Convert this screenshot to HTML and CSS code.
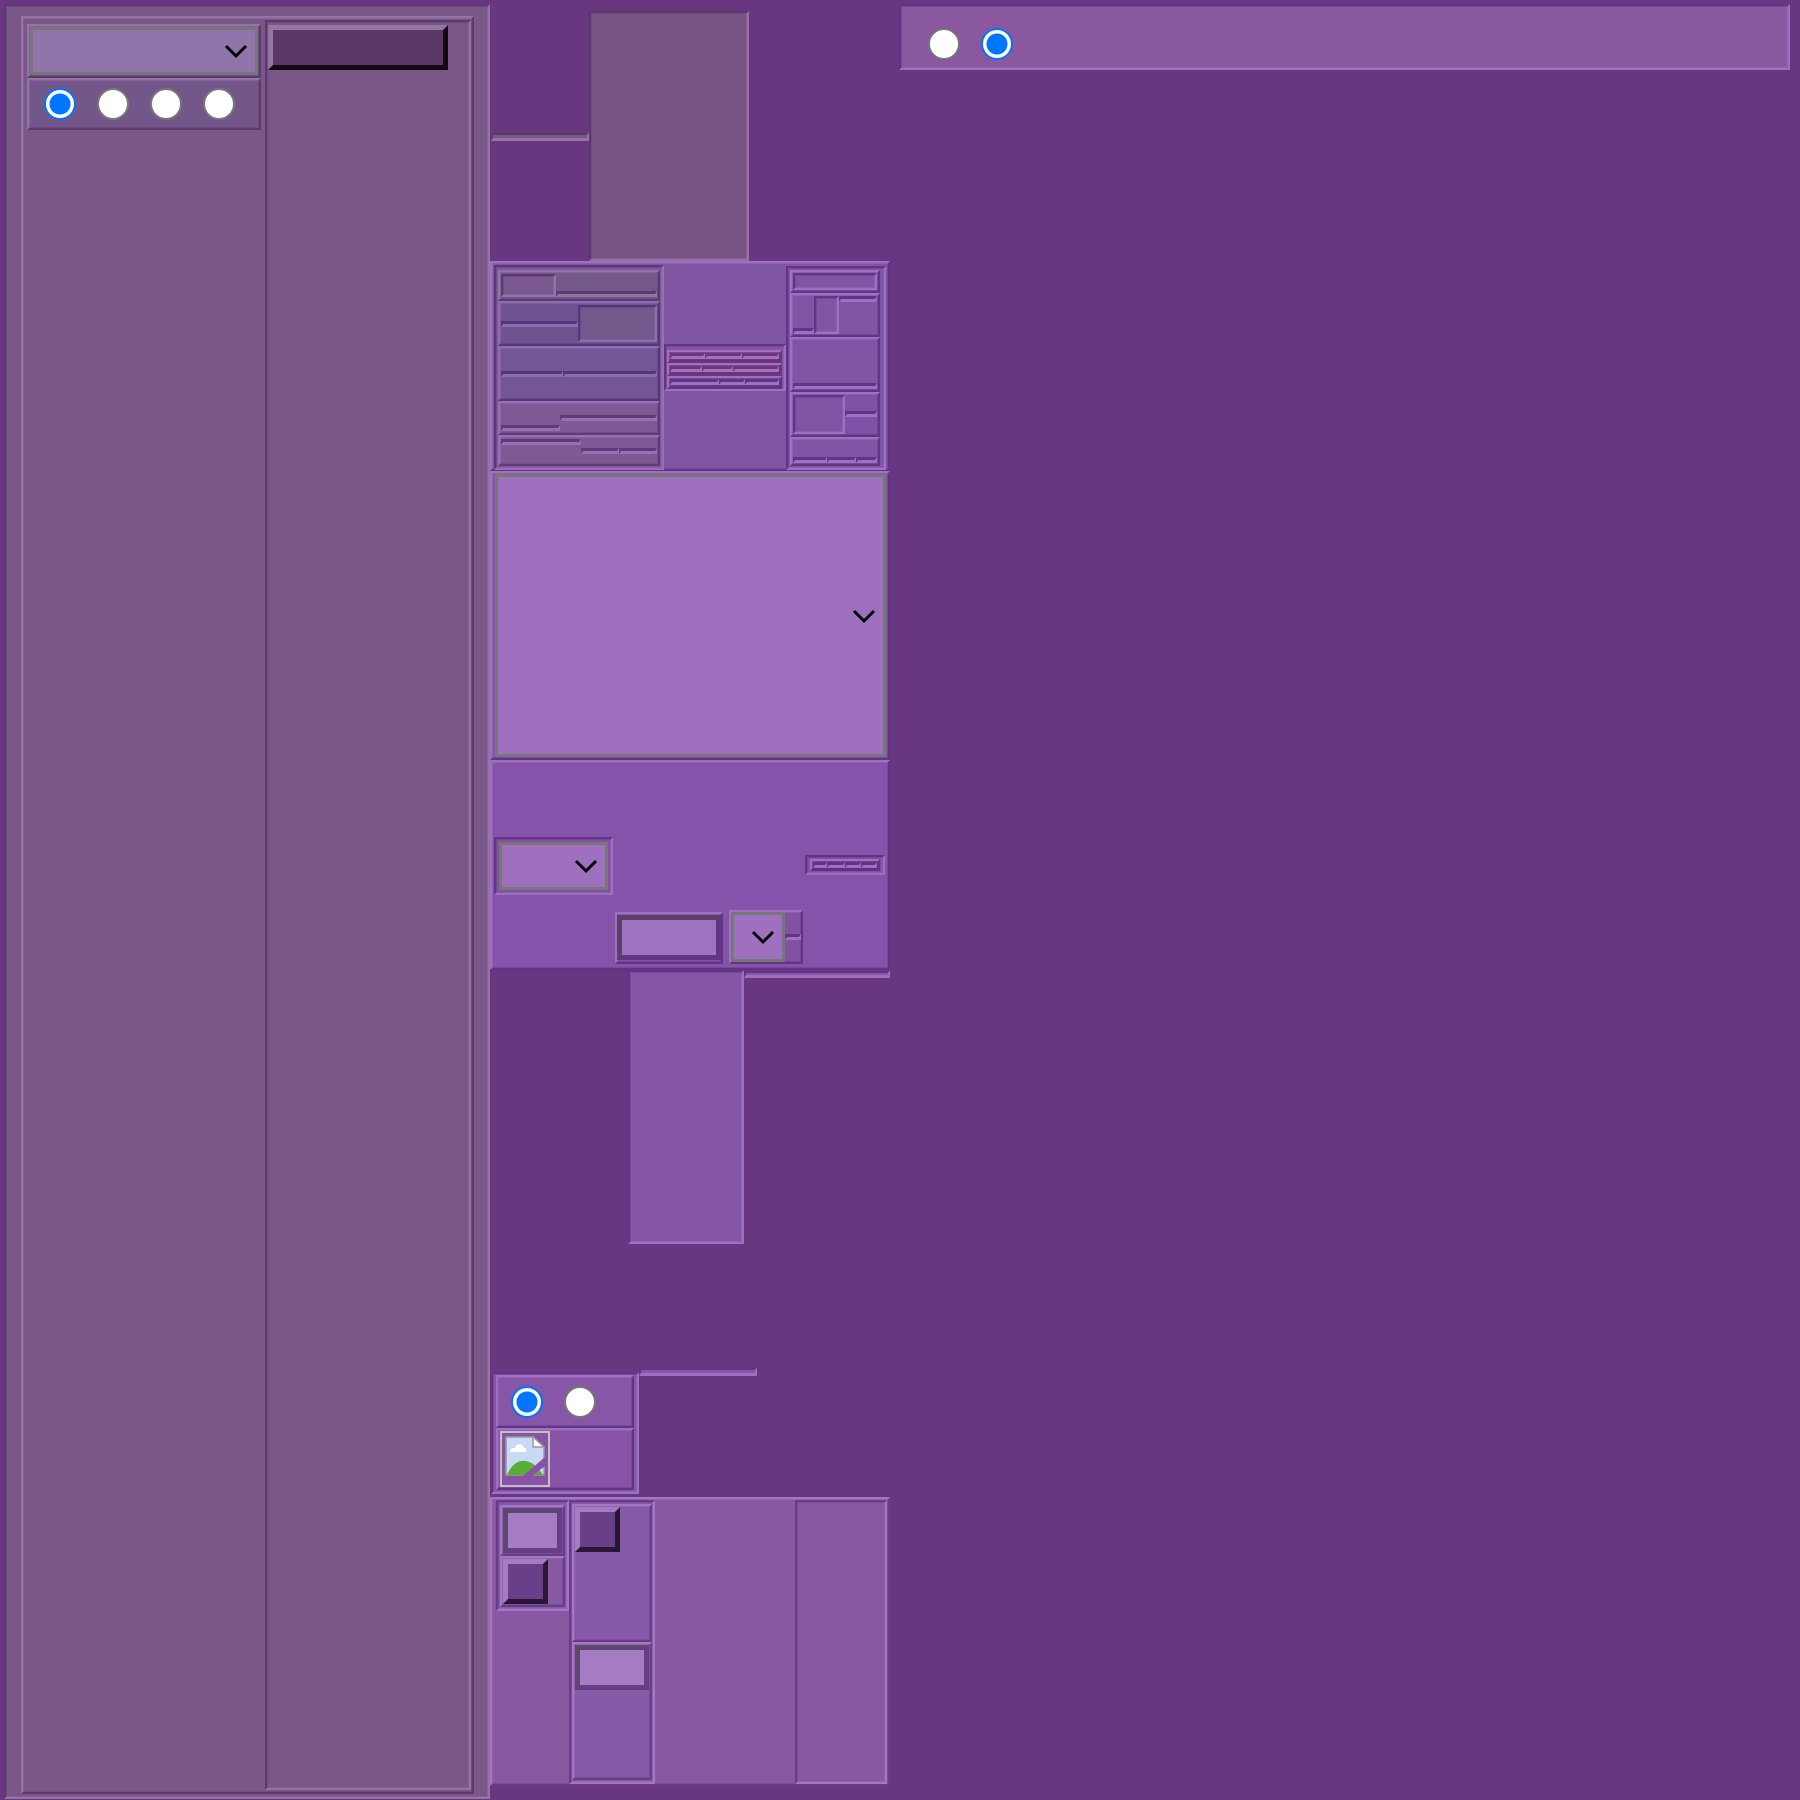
FILE: index.html
```html
<!DOCTYPE html>
<html lang="en">
<head>
<meta charset="utf-8">
<meta name="viewport" content="width=device-width, initial-scale=1">
<link rel="stylesheet" href="styles.css">
</head>
<body>
<main class="page">
  <section class="side in mauve">
    <div class="side-inner out">
      <div class="side-form">
        <div class="cell out"><div class="pick"><select aria-label="Option"></select><svg viewBox="0 0 22 12"><path d="M1 1l10 10L21 1"/></svg></div></div>
        <div class="radios out cool">
          <input type="radio" name="a" aria-label="First" checked><input type="radio" name="a" aria-label="Second"><input type="radio" name="a" aria-label="Third"><input type="radio" name="a" aria-label="Fourth">
        </div>
      </div>
      <div class="side-action in"><button type="button" class="wide" aria-label="Apply"></button></div>
    </div>
  </section>

  <div class="middle">
    <section class="intro mauve"><div class="strip tall"></div><div class="in intro-box"></div></section>

    <section class="tables out">
      <div class="list-left in mauve">
        <div class="row out l1"><div class="in"></div><div class="strip end"></div></div>
        <div class="row out l2"><div class="strip mid"></div><div class="in"></div></div>
        <div class="row out l3"><div class="strip mid"></div><div class="strip mid"></div></div>
        <div class="row out l4"><div class="strip end"></div><div class="strip mid"></div></div>
        <div class="row out l5"><div class="strip"></div><div class="strip mid"></div><div class="strip mid"></div></div>
      </div>
      <div class="list-mid in">
        <div class="row out m1"><div class="strip"></div><div class="strip"></div><div class="strip"></div></div>
        <div class="row out m2"><div class="strip"></div><div class="strip"></div><div class="strip"></div></div>
        <div class="row out m3"><div class="strip"></div><div class="strip"></div><div class="strip"></div></div>
      </div>
      <div class="list-right in">
        <div class="row out r1"><div class="in"></div></div>
        <div class="row out r2"><div class="strip end"></div><div class="in"></div><div class="strip"></div></div>
        <div class="row out r3"><div class="strip end"></div></div>
        <div class="row out r4"><div class="in"></div><div class="strip mid"></div></div>
        <div class="row out r5"><div class="strip end"></div><div class="strip end"></div><div class="strip end"></div></div>
      </div>
    </section>

    <section class="big out"><div class="pick"><select aria-label="Choice"></select><svg viewBox="0 0 22 12"><path d="M1 1l10 10L21 1"/></svg></div></section>

    <section class="controls out">
      <div class="control-a in"><div class="pick"><select aria-label="Kind"></select><svg viewBox="0 0 22 12"><path d="M1 1l10 10L21 1"/></svg></div></div>
      <div class="control-b out"><input type="text" aria-label="Value"></div>
      <div class="control-c out"><div class="pick"><select aria-label="Unit"></select><svg viewBox="0 0 22 12"><path d="M1 1l10 10L21 1"/></svg></div><div class="strip mid"></div></div>
      <div class="control-d in"><div class="row out"><div class="strip"></div><div class="strip"></div><div class="strip"></div><div class="strip"></div></div></div>
    </section>

    <section class="spacer"><div class="in"></div><div class="strip thick"></div></section>

    <section class="media">
      <div class="media-box in">
        <div class="radios out"><input type="radio" name="b" aria-label="On" checked><input type="radio" name="b" aria-label="Off"></div>
        <div class="picture out">
          <div class="frame">
            <svg viewBox="0 0 40 40">
              <path d="M1 1h27l11 10v28H1z" fill="#c8daf5" stroke="#999" stroke-width="1.5"/>
              <path d="M5 16c0-4 3-4 5-4 1-5 8-5 9 0 3 0 3 4 1 4z" fill="#fff"/>
              <path d="M2 39c8-19 24-19 36 0z" fill="#58ad36"/>
              <path d="M28 1v10h11z" fill="#fff" stroke="#999" stroke-width="1.5"/>
              <path d="M18 40L40 21v9L27 40z" fill="#8853a6"/>
            </svg>
          </div>
        </div>
      </div>
      <div class="strip tall"></div>
    </section>

    <section class="footer out">
      <div class="foot-a in">
        <div class="out foot-cell"><input type="text" aria-label="Code"></div>
        <div class="out foot-cell"><button type="button" aria-label="Add"></button></div>
      </div>
      <div class="foot-b in">
        <div class="out"><button type="button" aria-label="Save"></button></div>
        <div class="out"><input type="text" aria-label="Note"></div>
      </div>
      <div class="foot-c in"></div>
    </section>
  </div>

  <section class="right in"><div class="radios"><input type="radio" name="c" aria-label="No"><input type="radio" name="c" aria-label="Yes" checked></div></section>
</main>
</body>
</html>
```
FILE: styles.css
```css
* { box-sizing: border-box; }

body {
  --light: #9d70c2;
  --dark: #613485;
  margin: 0;
  background: #693782;
  font-family: "Liberation Sans", sans-serif;
}

.page {
  display: grid;
  grid-template-columns: minmax(0, 486fr) minmax(0, 400fr) minmax(0, 900fr);
  align-items: start;
  padding: 4px 10px 1px 4px;
}

.mauve { --light: #9673a6; --dark: #5b3b6c; }

/* Bevels: sunken and raised boxes */
.in, .out { border: 2px solid; }
.in {
  border-color: var(--dark) var(--light) var(--light) var(--dark);
  box-shadow: inset 1px 1px rgb(70 30 100 / 20%), inset -1px -1px rgb(190 140 220 / 20%);
}
.out {
  border-color: var(--light) var(--dark) var(--dark) var(--light);
  box-shadow: inset 1px 1px rgb(190 140 220 / 20%), inset -1px -1px rgb(70 30 100 / 20%);
}
.strip {
  height: 6px;
  border: solid;
  border-width: 3px 2px 3px 2px;
  border-color: var(--dark) var(--light) var(--light) var(--dark);
}
.tall { height: 9px; background: #795887; }
.thick { height: 8px; background: #8656a6; }
.mid { align-self: center; }
.end { align-self: end; }

/* Form controls */
select, input, button { display: block; margin: 0; padding: 0; appearance: none; border-radius: 0; }
.pick { position: relative; min-width: 0; }
.pick select { width: 100%; height: 100%; border: 3px solid #777; background: #9f6fc0; }
.pick svg { position: absolute; top: 50%; right: 11px; width: 22px; height: 12px; margin-top: -6px; pointer-events: none; overflow: visible; fill: none; stroke: #000; stroke-width: 3; }
input[type="text"] {
  width: 100%;
  height: 45px;
  border: 5px solid;
  border-color: #5e476f #673d88 #673d88 #5e476f;
  background: #a57bc4;
}
button {
  width: 45px;
  height: 45px;
  border: 5px solid;
  border-color: #a57bc6 #281835 #281835 #a57bc6;
  background: #693f89;
}
.radios { display: flex; align-items: center; gap: 21px; }
input[type="radio"] { flex: none; width: 32px; height: 32px; border: 2px solid #777; border-radius: 50%; background: #fff; }
input[type="radio"]:checked { border-color: #0075ff; background: radial-gradient(circle, #0075ff 10px, #fff 11px); }

/* Left panel */
.side { min-height: 1795px; display: grid; padding: 10px 14px 3px 15px; background: #795887; }
.side-inner { display: grid; grid-template-columns: 236fr 208fr; gap: 4px; padding: 2px 1px 2px 4px; }
.side-inner > .side-action { padding: 3px 1px; }
.side-form { padding-top: 4px; }
.side-form .cell { height: 54px; padding: 1px; }
.side-form .pick { height: 48px; }
.side-form .pick select { background: #9075aa; }
.side-form .radios { height: 52px; padding-left: 15px; background: #73578b; }
.wide { width: 90%; border-color: #9473a5 #140a17 #140a17 #9473a5; background: #593868; }

/* Middle column */
.intro { height: 257px; padding: 7px 0 0 1px; display: grid; grid-template-columns: 98fr 160fr 141fr; align-items: center; }
.intro-box { height: 250px; background: #795585; }

.tables {
  height: 210px;
  padding: 2px;
  display: grid;
  grid-template-columns: 170fr 122fr 100fr;
  align-items: center;
  background: #8055a4;
}
.row { display: grid; padding: 1px; }
.list-left { padding: 3px 2px 2px; }
.list-left .row { padding: 2px 1px; }
.l1 { height: 31px; grid-template-columns: 55fr 101fr; background: #74588c; }
.l1 > .in { background: #7b5890; }
.l2 { height: 45px; grid-template-columns: 78fr 80fr; background: #705290; --light: #8b6db0; --dark: #54377a; }
.l2 > .in { background: #74588c; }
.l3 { height: 55px; grid-template-columns: 62fr 94fr; background: #745595; --light: #8b6db0; --dark: #54377a; }
.l4 { height: 34px; grid-template-columns: 59fr 97fr; background: #7f5896; --light: #976fb3; --dark: #5f3b79; }
.l5 { height: 31px; grid-template-columns: 79fr 38fr 38fr; background: #7e5a95; --light: #976fb3; --dark: #5f3b79; }

.list-mid { padding: 4px 2px 0 1px; }
.list-mid .row { height: 13px; }
.m1 { grid-template-columns: 36fr 37fr 38fr; --light: #a96db9; --dark: #693783; background: #693783; }
.m2 { grid-template-columns: 33fr 32fr 47fr; --light: #a96db9; --dark: #693783; background: #693783; }
.m3 { grid-template-columns: 50fr 26fr 35fr; background: #693783; }

.list-right { padding: 2px 4px 2px 2px; }
.r1 { height: 23px; }
.r2 { height: 44px; grid-template-columns: 21fr 26fr 38fr; }
.r3 { height: 55px; }
.r4 { height: 45px; grid-template-columns: 53fr 32fr; background: #7e50a6; }
.r4 > .in { background: #7f54a2; }
.r5 { height: 29px; grid-template-columns: 34fr 30fr 21fr; }

.big { height: 289px; padding: 1px 2px 1px 3px; background: #8653aa; }
.big .pick { height: 283px; }

.controls {
  height: 210px;
  padding: 0 3px 4px 2px;
  display: grid;
  grid-template-columns: 119fr 112fr 80fr 80fr;
  align-items: end;
  background: #8653aa;
}
.controls > * { background: #8251a2; }
.control-a { height: 58px; margin-bottom: 69px; padding: 3px; }
.control-a .pick { height: 48px; }
.control-b { height: 52px; margin: 0 2px; padding: 1px 0 0; }
.control-b input[type="text"] { border-color: #5b4069 #613484 #613484 #5b4069; background: #9d72bf; }
.control-c { height: 54px; margin: 0 2px 0 4px; display: grid; grid-template-columns: 55fr 16fr; }
.control-c .pick { height: 50px; }
.control-d { height: 20px; margin-bottom: 89px; padding: 2px 3px; }
.control-d .row { height: 12px; grid-template-columns: 15fr 19fr 16fr 17fr; background: #613485; }

.spacer { height: 397px; display: grid; grid-template-columns: 138fr 116fr 146fr; align-items: start; }
.spacer .in { grid-column: 2; height: 274px; background: #8656a6; }

.media { height: 130px; padding: 0 0 0 1px; display: grid; grid-template-columns: 148fr 118fr 133fr; align-items: start; }
.media-box { height: 122px; margin-top: 5px; padding: 1px 3px 2px; background: #8756a6; }
.media .radios { height: 53px; padding-left: 13px; }
.media .tall { background: #8756a6; }
.picture { height: 62px; padding: 1px 2px; background: #8853a6; }
.frame { width: 50px; height: 56px; padding: 3px; border: 2px solid #c0c0c0; }
.frame svg { display: block; width: 40px; height: 40px; }

.footer {
  height: 289px;
  padding: 1px 1px 0 4px;
  display: grid;
  grid-template-columns: 73fr 86fr 140fr 92fr;
  align-items: start;
  background: #8958a3;
  --light: #a476c4;
  --dark: #693c87;
}
.foot-a { height: 111px; padding: 3px 2px; background: #855ba8; }
.foot-cell { height: 51px; padding: 1px; background: #8958a3; }
.foot-b { height: 284px; padding: 2px 1px; background: #855ba8; }
.foot-b > .out { height: 138px; padding: 1px; }
.foot-c { grid-column: 4; height: 284px; }

/* Right panel */
.right { height: 66px; margin-left: 9px; padding: 22px 27px 0; background: #89589f; }
```
